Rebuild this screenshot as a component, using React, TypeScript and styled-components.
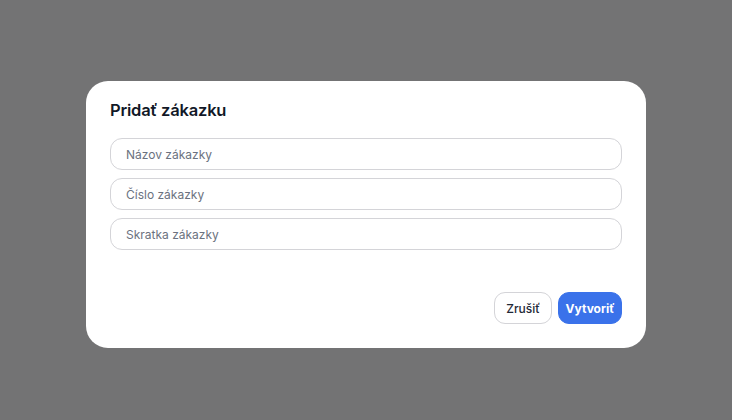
import React from "react";
import styled, { createGlobalStyle } from "styled-components";

const Global = createGlobalStyle`
  html, body { margin: 0; padding: 0; }
  body { font-family: Inter, "Noto Sans", sans-serif; background: #737373; }
  * { box-sizing: border-box; }
`;

const Backdrop = styled.div`
  width: 732px;
  height: 420px;
  background: #737374;
  display: flex;
  align-items: center;
  justify-content: center;
`;

const Modal = styled.div`
  width: 560px;
  height: 267px;
  background: #ffffff;
  border-radius: 22px;
  padding: 17px 24px 24px;
  display: flex;
  flex-direction: column;
  margin-top: 9px;
`;

const Title = styled.h2`
  margin: 0 0 16px;
  font-size: 16.5px;
  line-height: 24px;
  font-weight: 600;
  color: #111827;
  letter-spacing: -0.2px;
`;

const Fields = styled.div`
  display: flex;
  flex-direction: column;
  gap: 8px;
`;

const Input = styled.input`
  height: 32px;
  width: 100%;
  border: 1px solid #d4d4d8;
  border-radius: 12px;
  padding: 0 15px;
  font-family: inherit;
  font-size: 12px;
  color: #111827;
  outline: none;
  background: #fff;
  &::placeholder { color: #6b7280; }
`;

const Footer = styled.div`
  margin-top: auto;
  display: flex;
  justify-content: flex-end;
  gap: 6px;
`;

const Button = styled.button<{ $primary?: boolean }>`
  height: 32px;
  padding: 0 ${(p) => (p.$primary ? 6.5 : 11)}px;
  border-radius: 11px;
  font-family: inherit;
  font-size: 12px;
  font-weight: ${(p) => (p.$primary ? 700 : 500)};
  cursor: pointer;
  border: 1px solid ${(p) => (p.$primary ? "#3a72ea" : "#d4d4d8")};
  background: ${(p) => (p.$primary ? "#3a72ea" : "#ffffff")};
  color: ${(p) => (p.$primary ? "#ffffff" : "#1f2937")};
`;

export default function App() {
  return (
    <>
      <Global />
      <Backdrop>
        <Modal>
          <Title>Pridať zákazku</Title>
          <Fields>
            <Input placeholder="Názov zákazky" />
            <Input placeholder="Číslo zákazky" />
            <Input placeholder="Skratka zákazky" />
          </Fields>
          <Footer>
            <Button>Zrušiť</Button>
            <Button $primary>Vytvoriť</Button>
          </Footer>
        </Modal>
      </Backdrop>
    </>
  );
}
